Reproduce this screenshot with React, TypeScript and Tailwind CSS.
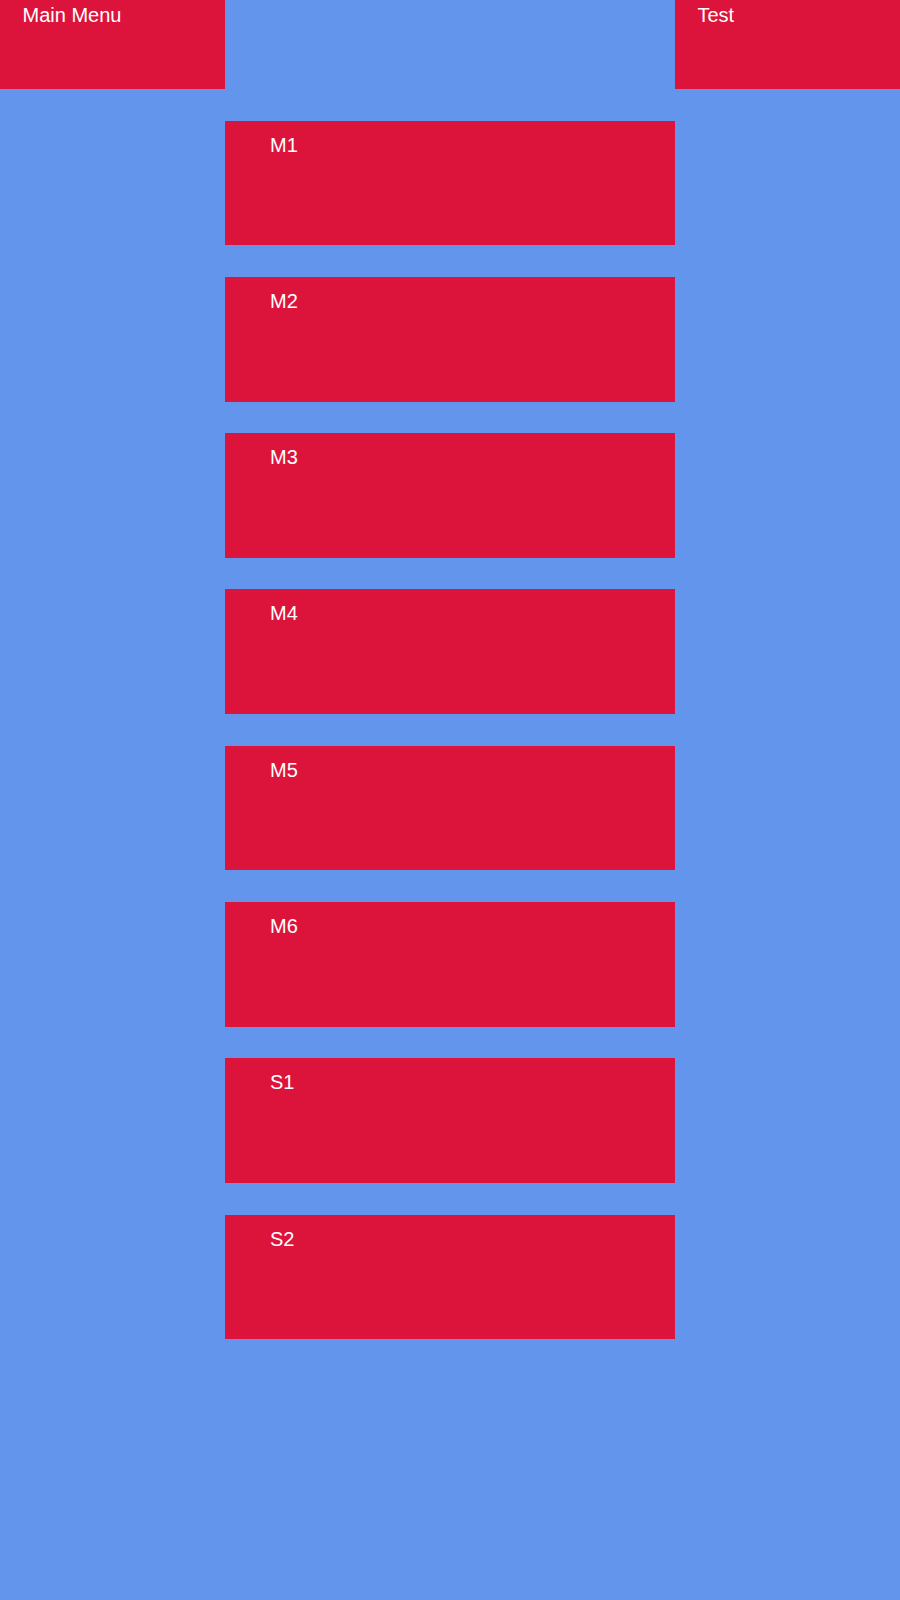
export default function App() {
  const items = ["M1", "M2", "M3", "M4", "M5", "M6", "S1", "S2"];
  return (
    <div
      className="w-[900px] h-[1600px] bg-[#6495ED] text-white text-[20px] leading-[23px]"
      style={{ fontFamily: '"Liberation Sans", Arial, sans-serif' }}
    >
      <div className="flex justify-between">
        <div className="w-[225px] h-[89px] bg-[#DC143C] pl-[22.5px] pt-[4px]">Main Menu</div>
        <div className="w-[225px] h-[89px] bg-[#DC143C] pl-[22.5px] pt-[4px]">Test</div>
      </div>
      <div className="flex flex-col items-center">
        {items.map((m) => (
          <div
            key={m}
            className="w-[450px] h-[124.8px] mt-[31.5px] bg-[#DC143C] pl-[45px] pt-[13px]"
          >
            {m}
          </div>
        ))}
      </div>
    </div>
  );
}
